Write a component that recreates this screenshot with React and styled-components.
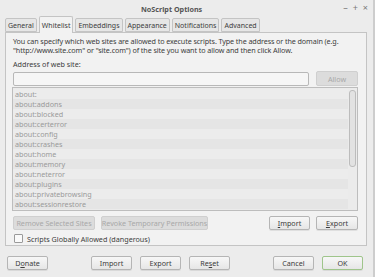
import React from 'react';
import styled, { createGlobalStyle } from 'styled-components';

const Global = createGlobalStyle`
  html, body {
    margin: 0;
    padding: 0;
    background: #ececec;
  }
  body {
    font-family: "Noto Sans", "DejaVu Sans", sans-serif;
    font-size: 7.2px;
    color: #3c3c3c;
  }
`;

const Window = styled.div`
  width: 375px;
  height: 277px;
  background: #ececec;
  display: flex;
  flex-direction: column;
  overflow: hidden;
  box-sizing: border-box;
  border-right: 2px solid #cdcdcd;
`;

const TitleBar = styled.div`
  height: 16px;
  flex-shrink: 0;
  display: flex;
  align-items: center;
  padding: 1px 5px 0 0;
  box-sizing: border-box;
`;

const Title = styled.div`
  flex: 1;
  text-align: center;
  font-weight: bold;
  font-size: 7.2px;
  color: #555;
`;

const Controls = styled.div`
  display: flex;
  gap: 5px;
  font-size: 9px;
  color: #7a7a7a;
  margin-top: -2px;
`;

const TabRow = styled.div`
  display: flex;
  flex-shrink: 0;
  align-items: flex-end;
  gap: 2px;
  padding: 0 5px;
  height: 16px;
  position: relative;
  z-index: 1;
`;

const Tab = styled.div`
  height: ${p => (p.$active ? '17px' : '14px')};
  padding: 0 2px;
  font-size: 7px;
  box-sizing: border-box;
  display: flex;
  align-items: center;
  border: 1px solid #c4c4c4;
  border-bottom: ${p => (p.$active ? 'none' : '1px solid #c4c4c4')};
  background: ${p => (p.$active ? '#f2f2f2' : '#e6e6e6')};
  border-radius: 2px 2px 0 0;
  color: #3c3c3c;
  margin-bottom: ${p => (p.$active ? '-1px' : '0')};
`;

const Panel = styled.div`
  margin: 0 6px 0 5px;
  border: 1px solid #c4c4c4;
  background: #f2f2f2;
  height: 214px;
  flex-shrink: 0;
  box-sizing: border-box;
  padding: 4px 8px 0 6px;
  display: flex;
  flex-direction: column;
`;

const Intro = styled.p`
  margin: 0 0 0 1px;
  line-height: 9px;
  letter-spacing: -0.1px;
  white-space: nowrap;
`;

const Label = styled.div`
  margin: 5px 0 0 1px;
  line-height: 9px;
`;

const AddressRow = styled.div`
  display: flex;
  gap: 7px;
  margin-top: 2px;
  align-items: center;
  height: 15px;
`;

const Input = styled.div`
  flex: 1;
  height: 14px;
  box-sizing: border-box;
  margin-left: 1px;
  border: 1px solid #b8b8b8;
  border-radius: 2px;
  background: #f6f6f6;
`;

const Button = styled.div`
  width: ${p => p.$w}px;
  height: ${p => p.$h || 14}px;
  flex-shrink: 0;
  box-sizing: border-box;
  display: flex;
  align-items: center;
  justify-content: center;
  border: 1px solid ${p => (p.$default ? '#9fc58b' : p.$disabled ? '#cfcfcf' : '#b5b5b5')};
  border-radius: 2px;
  background: ${p => (p.$disabled ? '#dcdcdc' : 'linear-gradient(#f7f7f7, #e6e6e6)')};
  color: ${p => (p.$disabled ? '#a8a8a8' : '#3c3c3c')};
  white-space: nowrap;
  box-shadow: ${p => (p.$disabled ? 'none' : '0 1px 0 rgba(0,0,0,0.08)')};
`;

const List = styled.div`
  margin-top: 1px;
  height: 124px;
  flex-shrink: 0;
  box-sizing: border-box;
  border: 1px solid #bdbdbd;
  display: flex;
  background: #ebebeb;
  overflow: hidden;
`;

const Rows = styled.div`
  flex: 1;
  padding-top: 1px;
`;

const Row = styled.div`
  height: 10px;
  line-height: 10px;
  padding-left: 2px;
  color: #9a9a9a;
  background: ${p => (p.$odd ? '#e5e5e5' : '#ececec')};
`;

const Scrollbar = styled.div`
  width: 9px;
  display: flex;
  justify-content: center;
  padding-top: 2px;
  background: #ebebeb;
`;

const Thumb = styled.div`
  width: 5px;
  height: 75px;
  border: 1px solid #bcbcbc;
  border-radius: 3px;
  background: #e2e2e2;
`;

const ActionRow = styled.div`
  display: flex;
  gap: 6px;
  margin: 5px 0 0 1px;
`;

const Spacer = styled.div`
  flex: 1;
`;

const CheckRow = styled.label`
  display: flex;
  align-items: center;
  gap: 4px;
  margin-top: 4px;
  margin-left: 2px;
  height: 9px;
`;

const Box = styled.span`
  width: 7px;
  height: 7px;
  border: 1px solid #9a9a9a;
  border-radius: 1px;
  background: #fafafa;
`;

const Footer = styled.div`
  flex: 1;
  display: flex;
  align-items: center;
  padding: 2px 10px 0 7px;
  gap: 8px;
`;

const U = styled.span`
  text-decoration: underline;
`;

const sites = [
  'about:',
  'about:addons',
  'about:blocked',
  'about:certerror',
  'about:config',
  'about:crashes',
  'about:home',
  'about:memory',
  'about:neterror',
  'about:plugins',
  'about:privatebrowsing',
  'about:sessionrestore',
];

const tabs = ['General', 'Whitelist', 'Embeddings', 'Appearance', 'Notifications', 'Advanced'];

export default function App() {
  return (
    <Window>
      <Global />
      <TitleBar>
        <Title>NoScript Options</Title>
        <Controls>
          <span>–</span>
          <span>+</span>
          <span>×</span>
        </Controls>
      </TitleBar>
      <TabRow>
        {tabs.map(t => (
          <Tab key={t} $active={t === 'Whitelist'}>
            {t}
          </Tab>
        ))}
      </TabRow>
      <Panel>
        <Intro>
          You can specify which web sites are allowed to execute scripts. Type the address or the domain (e.g.
          <br />
          "http://www.site.com" or "site.com") of the site you want to allow and then click Allow.
        </Intro>
        <Label>Address of web site:</Label>
        <AddressRow>
          <Input />
          <Button $w={42} $h={15} $disabled>
            Allow
          </Button>
        </AddressRow>
        <List>
          <Rows>
            {sites.map((s, i) => (
              <Row key={s} $odd={i % 2 === 1}>
                {s}
              </Row>
            ))}
          </Rows>
          <Scrollbar>
            <Thumb />
          </Scrollbar>
        </List>
        <ActionRow>
          <Button $w={82} $disabled>
            Remove Selected Sites
          </Button>
          <Button $w={107} $disabled>
            Revoke Temporary Permissions
          </Button>
          <Spacer />
          <Button $w={41}>
            <U>I</U>mport
          </Button>
          <Button $w={42}>
            <U>E</U>xport
          </Button>
        </ActionRow>
        <CheckRow>
          <Box />
          Scripts Globally Allowed (dangerous)
        </CheckRow>
      </Panel>
      <Footer>
        <Button $w={41}>
          D<U>o</U>nate
        </Button>
        <Spacer />
        <Button $w={41}>Import</Button>
        <Button $w={41}>Export</Button>
        <Button $w={41}>
          Re<U>s</U>et
        </Button>
        <Spacer />
        <Button $w={41}>Cancel</Button>
        <Button $w={41} $default>
          OK
        </Button>
      </Footer>
    </Window>
  );
}
